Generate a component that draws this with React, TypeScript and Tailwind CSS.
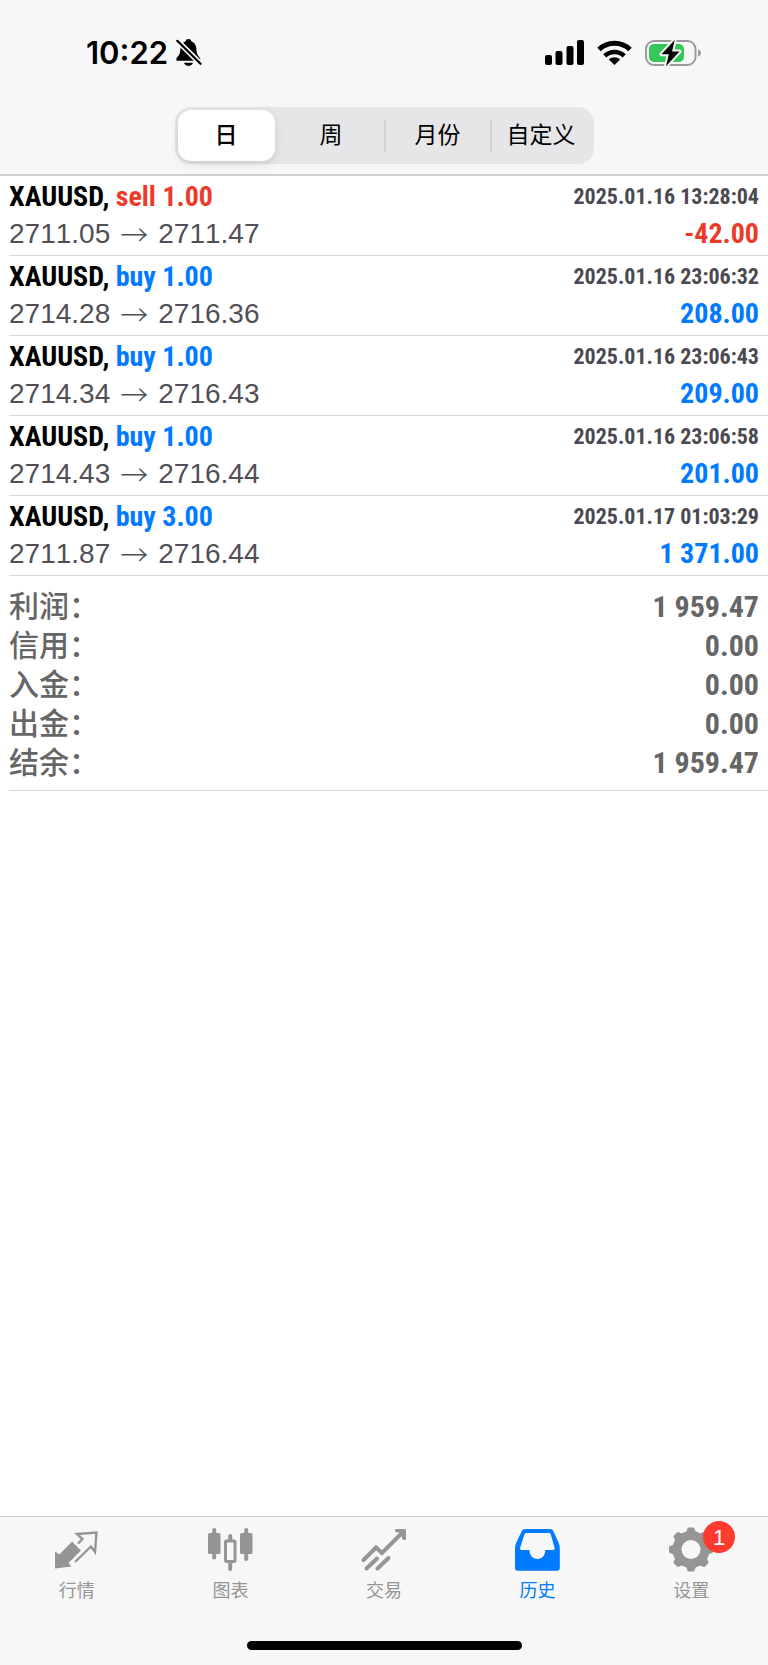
import type { ReactNode } from 'react';

type Deal = {
  side: 'sell' | 'buy';
  volume: string;
  open: string;
  close: string;
  time: string;
  profit: string;
};

const deals: Deal[] = [
  { side: 'sell', volume: '1.00', open: '2711.05', close: '2711.47', time: '2025.01.16 13:28:04', profit: '-42.00' },
  { side: 'buy', volume: '1.00', open: '2714.28', close: '2716.36', time: '2025.01.16 23:06:32', profit: '208.00' },
  { side: 'buy', volume: '1.00', open: '2714.34', close: '2716.43', time: '2025.01.16 23:06:43', profit: '209.00' },
  { side: 'buy', volume: '1.00', open: '2714.43', close: '2716.44', time: '2025.01.16 23:06:58', profit: '201.00' },
  { side: 'buy', volume: '3.00', open: '2711.87', close: '2716.44', time: '2025.01.17 01:03:29', profit: '1 371.00' },
];

const totals = [
  { label: '利润', value: '1 959.47' },
  { label: '信用', value: '0.00' },
  { label: '入金', value: '0.00' },
  { label: '出金', value: '0.00' },
  { label: '结余', value: '1 959.47' },
];

const condensed =
  "font-['Roboto_Condensed','Open_Sans_Condensed','Noto_Sans_Condensed','Arial_Narrow','Liberation_Sans',sans-serif] font-bold";

const BellOff = () => (
  <svg width="26" height="29" viewBox="0 0 26 29" aria-hidden="true">
    <path d="M12.500 1c-1.500 0-2.600.9-2.900 2.200C6.300 4.500 4.600 7.300 4.400 10.800c-.2 4.500-1 6-3 8.200C-.2 20.800-.2 22.700 1.800 22.700h21c2 0 2-1.900.4-3.700-2-2.200-2.600-3.700-2.800-8.200-.2-3.500-2-6.300-5-7.600C15.100 1.900 14 1 12.500 1z" />
    <path d="M8 24.700h9c-.5 1.900-2.300 3.100-4.500 3.100S8.500 26.600 8 24.700z" />
    <path d="M1 2.500l24.500 24" stroke="#f7f7f7" strokeWidth="5.500" />
    <path d="M1.300 2.800l23.200 23" stroke="#000" strokeWidth="2.200" strokeLinecap="round" />
  </svg>
);

const Signal = () => (
  <svg width="40" height="26" viewBox="0 0 40 26" aria-hidden="true">
    <rect x="0" y="15" width="7" height="10" rx="2" />
    <rect x="10.500" y="11" width="7" height="14" rx="2" />
    <rect x="21.500" y="6" width="7" height="19" rx="2" />
    <rect x="32" y="0" width="7" height="25" rx="2" />
  </svg>
);

const Wifi = () => (
  <svg width="36" height="27" viewBox="0 0 36 27" fill="none" stroke="#000" aria-hidden="true">
    <path d="M2 10.500a22.500 22.500 0 0 1 31 0" strokeWidth="5" />
    <path d="M7.800 16.800a14 14 0 0 1 19.400 0" strokeWidth="4.500" />
    <path d="M11.800 20.500a8.500 8.500 0 0 1 11.400 0L17.500 26z" fill="#000" stroke="none" />
  </svg>
);

const Battery = () => (
  <svg width="56" height="28" viewBox="0 0 56 28" aria-hidden="true">
    <rect x="1" y="2" width="49.500" height="24" rx="8" fill="none" stroke="#9a9a9a" strokeWidth="2" />
    <path d="M53 10.500c2 .6 3 1.900 3 3.500s-1 2.900-3 3.500z" fill="#9a9a9a" />
    <rect x="4" y="5" width="35" height="18" rx="5" fill="#34c759" />
    <path
      d="M29.700 1L16.500 15.200h7.300L21 27.300 34.500 12.500h-7.400z"
      stroke="#f7f7f7"
      strokeWidth="4"
      strokeLinejoin="round"
      paintOrder="stroke"
    />
  </svg>
);

const TabSvg = ({ children }: { children: ReactNode }) => (
  <svg width="48" height="48" viewBox="0 0 48 48" fill="none" aria-hidden="true">
    {children}
  </svg>
);

const QuotesIcon = () => (
  <TabSvg>
    <path d="M2 26.500l4.500 3L19 16.500l9 9L15.500 38l3 3.500L2 43.500z" fill="currentColor" />
    <path d="M25 18.500l4.500-4.500L24 9l19.500-1.500L42 27l-4-5.500L22 37" stroke="currentColor" strokeWidth="2.400" />
  </TabSvg>
);

const ChartIcon = () => (
  <TabSvg>
    <g fill="currentColor">
      <rect x="2" y="8" width="12.500" height="21" rx="1.500" />
      <rect x="34" y="8" width="12.500" height="21" rx="1.500" />
    </g>
    <g stroke="currentColor" strokeWidth="4" strokeLinecap="round">
      <path d="M8.200 5v27.500" />
      <path d="M40.200 5v29" />
      <path d="M24.200 11v4" />
      <path d="M24.200 38v6" />
    </g>
    <rect x="19.500" y="16" width="9.500" height="20.500" rx="1" stroke="currentColor" strokeWidth="3" />
  </TabSvg>
);

const TradeIcon = () => (
  <TabSvg>
    <g stroke="currentColor" strokeLinecap="round">
      <path d="M3.500 35L16 22.500l6 5.500L43 7" strokeWidth="4" />
      <path d="M6.500 43.500l10.500-10" strokeWidth="4" />
      <path d="M17.500 43.500l11-10.500" strokeWidth="4" />
    </g>
    <path d="M36 4h8c1.300 0 2 .7 2 2v8.500c-1.700 1-3.300.4-3.800-1L41 8l-5-1c-1.500-.6-1.400-2.600 0-3z" fill="currentColor" />
  </TabSvg>
);

const HistoryIcon = () => (
  <TabSvg>
    <path
      fill="currentColor"
      fillRule="evenodd"
      d="M11.500 4h24.500c1.800 0 2.700.7 3.400 2.200l5 11c1 2.300 1.400 4 1.400 6.300V43c0 1.800-1 2.800-2.800 2.800H3.800C2 45.800 1 44.800 1 43V23.500c0-2.300.4-4 1.400-6.300l5.300-11C8.400 4.700 9.700 4 11.500 4zM12.500 8c-1 0-1.600.4-2 1.300L6.200 22.500c-.4 1.500 0 2.500 1.500 2.500h7.800c0 5.300 3.300 9 8 9s7.700-3.700 7.700-9h7.800c1.500 0 1.900-1 1.500-2.500L36.700 9.300c-.4-.9-1-1.300-2-1.300z"
    />
  </TabSvg>
);

const SettingsIcon = () => (
  <TabSvg>
    <g fill="currentColor">
      {[0, 45, 90, 135, 180, 225, 270, 315].map((angle) => (
        <path
          key={angle}
          transform={`rotate(${angle} 24 24.500)`}
          d="M16.500 8.500c2.300-.5 3-1.700 3.500-3.700.4-1.700 1-2.300 2.300-2.300h3.400c1.300 0 1.900.6 2.300 2.300.5 2 1.200 3.200 3.500 3.700z"
        />
      ))}
    </g>
    <circle cx="24" cy="24.500" r="14" stroke="currentColor" strokeWidth="9" />
  </TabSvg>
);

const tabs = [
  { label: '行情', icon: <QuotesIcon /> },
  { label: '图表', icon: <ChartIcon /> },
  { label: '交易', icon: <TradeIcon /> },
  { label: '历史', icon: <HistoryIcon />, active: true },
  { label: '设置', icon: <SettingsIcon />, badge: 1 },
];

const StatusBar = () => (
  <div className="flex h-[107px] items-center justify-between pr-[67px] pb-0.5 pl-[86px]">
    <div className="flex items-center gap-2">
      <span className="font-['Inter',sans-serif] text-[31px] leading-10 font-semibold">10:22</span>
      <BellOff />
    </div>
    <div className="flex items-center gap-3">
      <Signal />
      <Wifi />
      <Battery />
    </div>
  </div>
);

const PeriodPicker = () => (
  <div className="mx-auto grid h-[57px] w-[419px] grid-cols-[97px_109px_106px_1fr] rounded-2xl bg-[#e6e6e8] p-[3px] text-[23px]">
    <button type="button" aria-pressed="true" className="rounded-[13px] bg-white font-medium shadow-[0_3px_8px_rgba(0,0,0,0.12)]">
      日
    </button>
    <button type="button" className="pl-1">周</button>
    <div className="flex items-center">
      <div className="h-8 w-0.5 bg-[#d2d2d6]" />
      <button type="button" className="h-full flex-1">月份</button>
    </div>
    <div className="flex items-center">
      <div className="h-8 w-0.5 bg-[#d2d2d6]" />
      <button type="button" className="h-full flex-1 whitespace-nowrap">自定义</button>
    </div>
  </div>
);

const DealRow = ({ deal }: { deal: Deal }) => {
  const color = deal.profit.startsWith('-') ? 'text-[#eb3b2b]' : 'text-[#007aff]';
  return (
    <li className="ml-[9px] flex h-20 flex-col border-b border-[#d9d9db] pt-0.5 pr-[9px]">
      <div className={`flex h-[37px] items-center justify-between ${condensed}`}>
        <p className="text-[28px] leading-9">
          XAUUSD, <span className={deal.side === 'sell' ? 'text-[#eb3b2b]' : 'text-[#007aff]'}>{deal.side} {deal.volume}</span>
        </p>
        <p className="text-[22px] leading-9 text-[#4a4a50]">{deal.time}</p>
      </div>
      <div className="flex h-[38px] items-center justify-between">
        <p className="flex items-center gap-2.5 text-[28px] leading-9 text-[#505056] [font-kerning:none]">
          {deal.open}
          <span className="font-['Noto_Sans_CJK_SC',sans-serif] font-light">→</span>
          {deal.close}
        </p>
        <p className={`text-[28px] leading-9 ${condensed} ${color}`}>{deal.profit}</p>
      </div>
    </li>
  );
};

const App = () => (
  <div className="flex min-h-screen flex-col bg-white font-['Liberation_Sans','Noto_Sans_CJK_SC',sans-serif] text-black">
    <header className="h-44 border-b-2 border-[#cfcfcf] bg-[#f7f7f7]">
      <StatusBar />
      <PeriodPicker />
    </header>

    <main className="flex-1">
      <ul>
        {deals.map((deal) => (
          <DealRow key={deal.time} deal={deal} />
        ))}
      </ul>
      <dl className="ml-[9px] border-b border-[#d9d9db] pt-[11px] pr-[9px] pb-2 text-[#666]">
        {totals.map(({ label, value }) => (
          <div key={label} className="flex h-[39px] items-center justify-between">
            <dt className="text-[30px] leading-9 font-medium">{label}：</dt>
            <dd className={`text-[30px] leading-9 ${condensed}`}>{value}</dd>
          </div>
        ))}
      </dl>
    </main>

    <footer className="border-t border-[#cfcfcf] bg-[#f7f7f7]">
      <nav className="grid grid-cols-5 pt-2">
        {tabs.map(({ label, icon, active, badge }) => (
          <a
            key={label}
            href="#"
            aria-current={active ? 'page' : undefined}
            className={`flex flex-col items-center gap-1.5 ${active ? 'text-[#007aff]' : 'text-[#959595]'}`}
          >
            <span className="relative block h-12">
              {icon}
              {badge && (
                <span className="absolute -top-1 -right-5 flex size-8 items-center justify-center rounded-full bg-[#ff3b30] text-[22px] text-white">
                  {badge}
                </span>
              )}
            </span>
            <span className="text-lg leading-6">{label}</span>
          </a>
        ))}
      </nav>
      <div className="mx-auto mt-[38px] mb-[15px] h-[9px] w-[275px] rounded-full bg-black" />
    </footer>
  </div>
);

export default App;
